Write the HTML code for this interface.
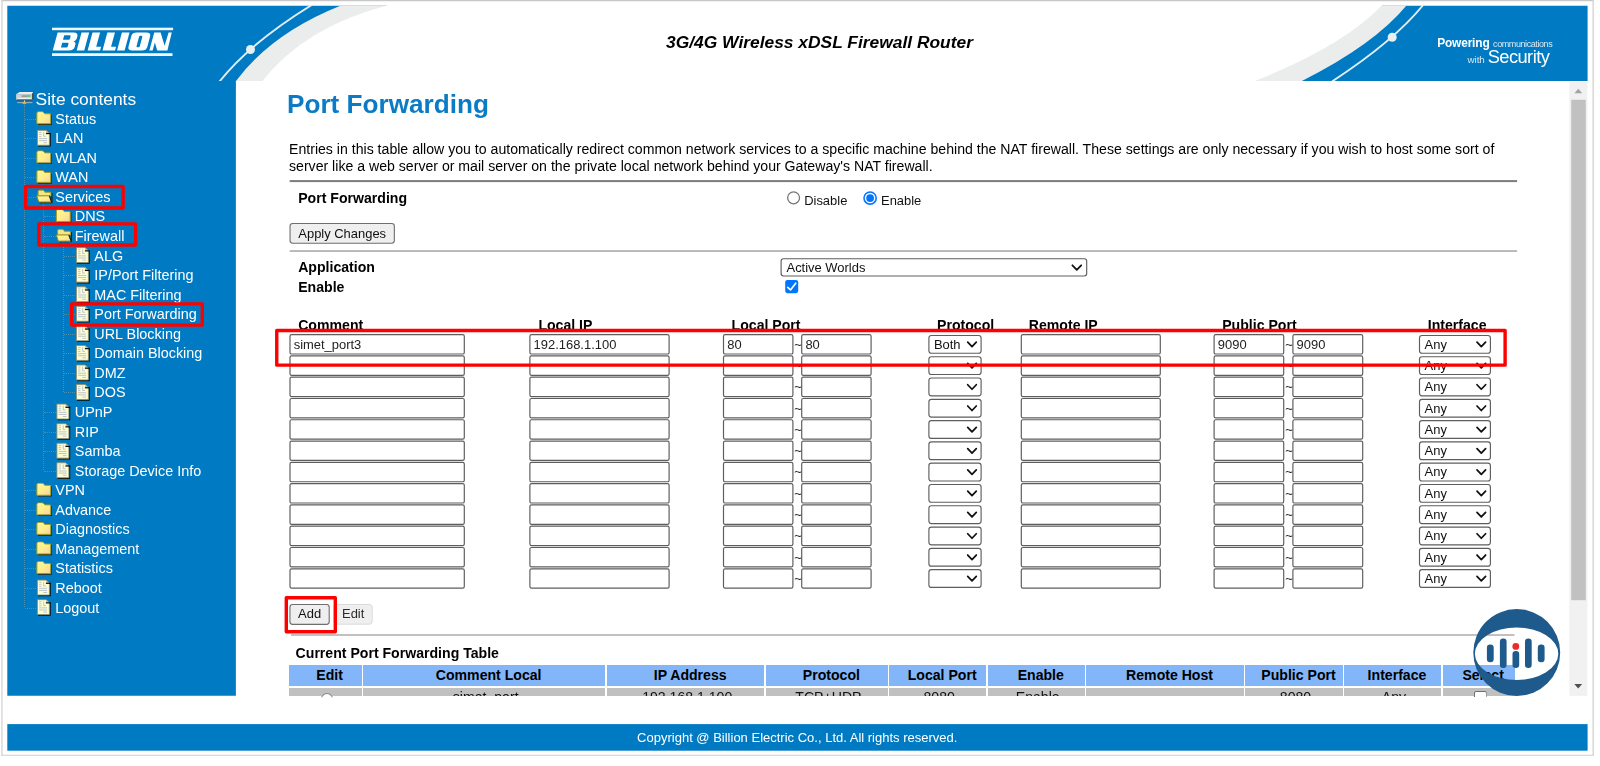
<!DOCTYPE html>
<html><head><meta charset="utf-8"><title>Port Forwarding</title>
<style>
html,body{margin:0;padding:0;background:#fff;}
body{width:1600px;height:766px;position:relative;overflow:hidden;font-family:"Liberation Sans",sans-serif;}
.abs{position:absolute;}
.frame{position:absolute;left:1px;top:0;width:1591px;height:755px;border:1.5px solid #cfcfcf;border-left-color:#d8d8d8;}
.side{position:absolute;left:8px;top:81px;width:228px;height:615px;background:#007bc3;}
.foot{position:absolute;left:8px;top:724px;width:1580px;height:27px;color:#fff;font-size:13px;text-align:center;line-height:27.6px;padding-right:1.5px;box-sizing:border-box;}
.t{position:absolute;color:#fff;font-size:14.4px;white-space:nowrap;line-height:16px;letter-spacing:0;}
.red{position:absolute;overflow:visible;}
.lbl{position:absolute;font-weight:bold;font-size:14.1px;color:#000;white-space:nowrap;line-height:16px;}
.inp{position:absolute;box-sizing:border-box;height:20.4px;border:1px solid #767676;border-radius:2px;background:#fff;font-size:12.95px;color:#222;line-height:18.6px;padding-left:3.3px;white-space:nowrap;}
.sel{position:absolute;box-sizing:border-box;height:18.8px;border:1px solid #767676;border-radius:2.8px;background:#fff;font-size:12.95px;color:#111;line-height:17.2px;padding-left:4.9px;white-space:nowrap;}
.sel svg{position:absolute;right:4.6px;top:5.4px;}
.itx{position:absolute;font-size:12.95px;color:#222;line-height:16px;white-space:nowrap;}
.til{position:absolute;font-size:12.9px;color:#223;line-height:14px;}
.btn{position:absolute;box-sizing:border-box;border:1px solid #767676;border-radius:3px;background:#efefef;font-size:12.9px;color:#111;text-align:center;white-space:nowrap;}
.hr{position:absolute;left:289px;width:1228px;height:0;}
.th{position:absolute;top:665.3px;height:20.3px;background:#83b6f9;font-weight:bold;font-size:14.1px;text-align:center;line-height:20.3px;color:#000;white-space:nowrap;box-sizing:border-box;padding-left:9px;}
.td{position:absolute;top:687.5px;height:8.5px;background:#c0c0c0;font-size:14.1px;text-align:center;line-height:18px;color:#111;white-space:nowrap;overflow:hidden;box-sizing:border-box;padding-left:3px;}
</style></head><body>
<div id="wrap" style="position:absolute;left:0;top:0;width:1600px;height:766px;filter:blur(0.35px)">

<svg class="abs" style="left:0;top:0" width="1600" height="766" viewBox="0 0 1600 766">
<rect x="1.2" y="0" width="1592.6" height="1.25" fill="#c7c7c7"/><rect x="1.2" y="0" width="1.5" height="755.9" fill="#d9d9d9"/><rect x="1592.5" y="0" width="1.35" height="755.9" fill="#d4d4d4"/><rect x="1.2" y="754.7" width="1592.6" height="1.2" fill="#d6d6d6"/>
<path d="M7.3,5.8 H1587.6 V81 H235.9 V695.8 H7.3 Z" fill="#007bc3"/>
<rect x="7.3" y="724.1" width="1580.3" height="26.6" fill="#007bc3"/>
</svg>
<svg class="abs" style="left:7px;top:5px" width="1582" height="76" viewBox="7 5 1582 76">
<defs><clipPath id="hc"><rect x="0" y="5.8" width="1600" height="90"/></clipPath></defs>
<g clip-path="url(#hc)"><path d="M236,81 Q272,33 341,5.6 L341,3 L1406.5,3 L1406.5,5.6 Q1373.8,45 1301.9,81 Z" fill="#ebecec"/></g>
<path d="M262.5,81 Q305,27 387,5.6 L387,3 L1381.8,3 L1381.8,5.6 Q1341.8,47 1254.6,81 Z" fill="#fff"/>
<path d="M219.5,81.5 Q250,43 312.5,4.5" fill="none" stroke="#e3edf4" stroke-width="1.9"/>
<circle cx="250.5" cy="49.5" r="4.5" fill="#e9eef1"/>
<path d="M1332,81.5 Q1394.2,41 1423.6,4.5" fill="none" stroke="#e3edf4" stroke-width="1.9"/>
<circle cx="1392.2" cy="37.2" r="4.5" fill="#e9eef1"/>
</svg>
<svg class="abs" style="left:48px;top:24px" width="130" height="36" viewBox="48 24 130 36">
<g fill="#fff">
<rect x="52" y="27.7" width="121.1" height="2.5" fill="#f0f6fb"/>
<rect x="52" y="53.2" width="120.5" height="2.8" fill="#f0f6fb"/>
<g transform="translate(0,41.5) scale(0.997,0.972) translate(0.2,-41.5)"><path fill-rule="evenodd" d="M52.7,50.8 L57.6,32.2 L73.5,32.2 Q78.3,32.2 77.4,36.2 L76.9,38.2 Q76.2,40.6 73.6,41.4 Q76,42.1 75.4,44.6 L74.8,46.9 Q73.8,50.8 68.8,50.8 Z M64.2,35.1 L63,39.7 L68.6,39.7 Q69.7,39.7 70,38.6 L70.6,36.2 Q70.9,35.1 69.8,35.1 Z M62.2,42.7 L60.9,47.6 L66.5,47.6 Q67.6,47.6 67.9,46.5 L68.5,43.8 Q68.8,42.7 67.7,42.7 Z"/>
<path d="M76.7,50.8 L81.6,32.2 L89.2,32.2 L84.3,50.8 Z"/>
<path d="M87.7,50.8 L92.6,32.2 L100.2,32.2 L96.3,47 L101.2,47 L100.2,50.8 Z"/>
<path d="M102.6,50.8 L107.5,32.2 L115.1,32.2 L111.2,47 L116.2,47 L115.2,50.8 Z"/>
<path d="M117.2,50.8 L122.1,32.2 L129.7,32.2 L124.8,50.8 Z"/>
<path fill-rule="evenodd" d="M132.5,50.8 Q127.6,50.8 128.7,46.6 L131.6,35.6 Q132.5,32.2 137,32.2 L146.6,32.2 Q151.4,32.2 150.4,36.2 L147.5,47.2 Q146.5,50.8 142,50.8 Z M140.6,35.6 Q139.6,35.6 139.3,36.7 L136.8,46.2 Q136.5,47.4 137.6,47.4 L138.6,47.4 Q139.7,47.4 140,46.3 L142.5,36.8 Q142.8,35.6 141.7,35.6 Z"/>
<path d="M149.6,50.8 L154.5,32.2 L160.9,32.2 L164.9,46 L168.9,32.2 L172.1,32.2 L167.7,50.8 L157.5,50.8 L155.1,42.6 L152.9,50.8 Z"/>
</g></g></svg>
<div class="abs" style="left:519.5px;top:32.4px;width:600px;text-align:center;font-weight:bold;font-style:italic;font-size:17.4px;line-height:20px;color:#000;white-space:nowrap">3G/4G Wireless xDSL Firewall Router</div>
<div class="abs" style="left:1437.2px;top:35.7px;color:#fff;white-space:nowrap;font-size:11.9px;line-height:14px;font-weight:bold;letter-spacing:-0.15px">Powering<span style="font-weight:normal;font-size:9px;letter-spacing:-0.42px;color:#dbe9f4;margin-left:3.6px">communications</span></div>
<div class="abs" style="left:1467.6px;top:46.2px;color:#fff;white-space:nowrap;font-size:9.8px;line-height:22px;letter-spacing:-0.1px"><span style="color:#dbe9f4">with</span><span style="font-size:18.3px;letter-spacing:-0.55px;margin-left:3px">Security</span></div>
<div class="foot">Copyright @ Billion Electric Co., Ltd. All rights reserved.</div>
<svg width="0" height="0" style="position:absolute"><defs><linearGradient id="fg" x1="0" y1="0" x2="1" y2="1"><stop offset="0" stop-color="#fff691"/><stop offset="0.5" stop-color="#fdef8c"/><stop offset="1" stop-color="#f9cfa8"/></linearGradient></defs></svg>
<svg class="abs" style="left:15px;top:90px" width="20" height="16" viewBox="0 0 20 16">
<path d="M1.1,4.3 L4.6,2.1 L18,2.1 L17.1,4.3 Z" fill="#ececec"/>
<path d="M17.1,4.2 L18.4,2.2 L18.4,8.2 L17.1,9.8 Z" fill="#3a3a3a"/>
<rect x="1.1" y="4.15" width="16" height="5.6" fill="#cfcfcf"/>
<rect x="6.6" y="5.4" width="6.4" height="1.4" fill="#8e8e8e"/>
<rect x="13" y="5.1" width="2.6" height="1.8" fill="#5fcf6c"/>
<rect x="2.8" y="7.9" width="13.2" height="1" fill="#f2f2f2"/>
<rect x="1.8" y="9.5" width="15.6" height="0.95" fill="#484848"/>
<rect x="9" y="10.4" width="1" height="1.6" fill="#d6d6d6"/>
<rect x="2.2" y="12.3" width="15.2" height="0.8" fill="#c4c4c4"/>
<rect x="2.2" y="13.1" width="15.2" height="0.8" fill="#6c6c6c"/>
<ellipse cx="9.4" cy="13" rx="2.05" ry="1.2" fill="#f0a61a"/>
<ellipse cx="9" cy="12.6" rx="0.9" ry="0.45" fill="#f8d060"/>
</svg>
<div class="t" style="left:35.6px;top:89.4px;font-size:17.4px;line-height:20px">Site contents</div>
<div class="abs" style="left:23.9px;top:105px;width:0;height:502.07500000000005px;border-left:1px dotted rgba(172,170,145,0.42)"></div>
<div class="abs" style="left:43.3px;top:203.42000000000002px;width:0;height:266.77px;border-left:1px dotted rgba(172,170,145,0.42)"></div>
<div class="abs" style="left:62.8px;top:242.53px;width:0;height:149.43999999999997px;border-left:1px dotted rgba(172,170,145,0.42)"></div>
<div class="abs" style="left:24.799999999999997px;top:118.7px;width:11.5px;height:0;border-top:1px dotted rgba(172,170,145,0.42)"></div>
<svg class="abs" style="left:36px;top:111px" width="17" height="15" viewBox="-0.3 -0.2 17 15"><path d="M1.6,13.2 L15,13.2 L15,3.6" fill="none" stroke="#26260a" stroke-width="1.2"/><path d="M0.6,12.5 L0.6,2 Q0.6,0.6 2,0.6 L6,0.6 Q7,0.6 7.8,1.7 L8.5,2.6 L13.4,2.6 Q14.4,2.6 14.4,3.6 L14.4,12.5 Z" fill="url(#fg)" stroke="#a59c20" stroke-width="1"/><path d="M2,1.6 L6,1.6" stroke="#fffbd0" stroke-width="0.9" opacity="0.8"/></svg>
<div class="t" style="left:55.3px;top:110.6px">Status</div>
<div class="abs" style="left:24.799999999999997px;top:138.255px;width:11.5px;height:0;border-top:1px dotted rgba(172,170,145,0.42)"></div>
<svg class="abs" style="left:36px;top:129px" width="16" height="19" viewBox="-0.7 -0.66 16 19"><path d="M13.4,3.4 L13.4,16.2 L1.2,16.2" fill="none" stroke="#0c0c0c" stroke-width="1.3"/><path d="M0.7,0.7 L9.4,0.7 L12.7,3.8 L12.7,15.6 L0.7,15.6 Z" fill="#ffffd6" stroke="#8c8c6a" stroke-width="0.9"/><path d="M9.4,0.8 L9.4,3.7 L12.6,3.7 Z" fill="#b9b99c"/><path d="M9.2,3.9 L13.9,3.9" stroke="#0c0c0c" stroke-width="1.2"/><path d="M2.4,2.8 H4.8 M2.4,4.8 H4.8 M2.4,6.8 H4.8 M7,2.4 V6.6 H9.2 M2.4,8.9 H10.4 M2.4,11 H10.4 M6.6,13.1 H10.4" fill="none" stroke="#b4bccc" stroke-width="0.9"/></svg>
<div class="t" style="left:55.3px;top:130.2px">LAN</div>
<div class="abs" style="left:24.799999999999997px;top:157.81px;width:11.5px;height:0;border-top:1px dotted rgba(172,170,145,0.42)"></div>
<svg class="abs" style="left:36px;top:150px" width="17" height="15" viewBox="-0.3 -0.31 17 15"><path d="M1.6,13.2 L15,13.2 L15,3.6" fill="none" stroke="#26260a" stroke-width="1.2"/><path d="M0.6,12.5 L0.6,2 Q0.6,0.6 2,0.6 L6,0.6 Q7,0.6 7.8,1.7 L8.5,2.6 L13.4,2.6 Q14.4,2.6 14.4,3.6 L14.4,12.5 Z" fill="url(#fg)" stroke="#a59c20" stroke-width="1"/><path d="M2,1.6 L6,1.6" stroke="#fffbd0" stroke-width="0.9" opacity="0.8"/></svg>
<div class="t" style="left:55.3px;top:149.7px">WLAN</div>
<div class="abs" style="left:24.799999999999997px;top:177.365px;width:11.5px;height:0;border-top:1px dotted rgba(172,170,145,0.42)"></div>
<svg class="abs" style="left:36px;top:169px" width="17" height="15" viewBox="-0.3 -0.87 17 15"><path d="M1.6,13.2 L15,13.2 L15,3.6" fill="none" stroke="#26260a" stroke-width="1.2"/><path d="M0.6,12.5 L0.6,2 Q0.6,0.6 2,0.6 L6,0.6 Q7,0.6 7.8,1.7 L8.5,2.6 L13.4,2.6 Q14.4,2.6 14.4,3.6 L14.4,12.5 Z" fill="url(#fg)" stroke="#a59c20" stroke-width="1"/><path d="M2,1.6 L6,1.6" stroke="#fffbd0" stroke-width="0.9" opacity="0.8"/></svg>
<div class="t" style="left:55.3px;top:169.3px">WAN</div>
<div class="abs" style="left:24.799999999999997px;top:196.92000000000002px;width:11.5px;height:0;border-top:1px dotted rgba(172,170,145,0.42)"></div>
<svg class="abs" style="left:36px;top:189px" width="18" height="15" viewBox="-0.1 -0.62 18 15"><path d="M15.8,3.4 L15.8,13 L3.4,13.2" fill="none" stroke="#26260a" stroke-width="1.3"/><path d="M2,11 L2,2 Q2,0.6 3.4,0.6 L6.6,0.6 Q7.6,0.6 8.2,1.6 L8.8,2.6 L13.8,2.6 Q14.8,2.6 14.8,3.6 L14.8,6.4" fill="#f3e686" stroke="#a59c20" stroke-width="1"/><path d="M0.6,6.2 L13.2,6.2 L15.4,12.4 L2.8,12.4 Z" fill="url(#fg)" stroke="#8f8618" stroke-width="1"/><path d="M13.3,6 L15.6,12.6" stroke="#1a1a08" stroke-width="1.1"/></svg>
<div class="t" style="left:55.3px;top:188.8px">Services</div>
<div class="abs" style="left:44.3px;top:216.47500000000002px;width:11.5px;height:0;border-top:1px dotted rgba(172,170,145,0.42)"></div>
<svg class="abs" style="left:55px;top:208px" width="17" height="15" viewBox="-0.8 -0.98 17 15"><path d="M1.6,13.2 L15,13.2 L15,3.6" fill="none" stroke="#26260a" stroke-width="1.2"/><path d="M0.6,12.5 L0.6,2 Q0.6,0.6 2,0.6 L6,0.6 Q7,0.6 7.8,1.7 L8.5,2.6 L13.4,2.6 Q14.4,2.6 14.4,3.6 L14.4,12.5 Z" fill="url(#fg)" stroke="#a59c20" stroke-width="1"/><path d="M2,1.6 L6,1.6" stroke="#fffbd0" stroke-width="0.9" opacity="0.8"/></svg>
<div class="t" style="left:74.8px;top:208.4px">DNS</div>
<div class="abs" style="left:44.3px;top:236.03px;width:11.5px;height:0;border-top:1px dotted rgba(172,170,145,0.42)"></div>
<svg class="abs" style="left:55px;top:228px" width="18" height="15" viewBox="-0.6 -0.73 18 15"><path d="M15.8,3.4 L15.8,13 L3.4,13.2" fill="none" stroke="#26260a" stroke-width="1.3"/><path d="M2,11 L2,2 Q2,0.6 3.4,0.6 L6.6,0.6 Q7.6,0.6 8.2,1.6 L8.8,2.6 L13.8,2.6 Q14.8,2.6 14.8,3.6 L14.8,6.4" fill="#f3e686" stroke="#a59c20" stroke-width="1"/><path d="M0.6,6.2 L13.2,6.2 L15.4,12.4 L2.8,12.4 Z" fill="url(#fg)" stroke="#8f8618" stroke-width="1"/><path d="M13.3,6 L15.6,12.6" stroke="#1a1a08" stroke-width="1.1"/></svg>
<div class="t" style="left:74.8px;top:227.9px">Firewall</div>
<div class="abs" style="left:63.8px;top:255.58499999999998px;width:11.5px;height:0;border-top:1px dotted rgba(172,170,145,0.42)"></div>
<svg class="abs" style="left:75px;top:246px" width="16" height="19" viewBox="-0.7 -0.98 16 19"><path d="M13.4,3.4 L13.4,16.2 L1.2,16.2" fill="none" stroke="#0c0c0c" stroke-width="1.3"/><path d="M0.7,0.7 L9.4,0.7 L12.7,3.8 L12.7,15.6 L0.7,15.6 Z" fill="#ffffd6" stroke="#8c8c6a" stroke-width="0.9"/><path d="M9.4,0.8 L9.4,3.7 L12.6,3.7 Z" fill="#b9b99c"/><path d="M9.2,3.9 L13.9,3.9" stroke="#0c0c0c" stroke-width="1.2"/><path d="M2.4,2.8 H4.8 M2.4,4.8 H4.8 M2.4,6.8 H4.8 M7,2.4 V6.6 H9.2 M2.4,8.9 H10.4 M2.4,11 H10.4 M6.6,13.1 H10.4" fill="none" stroke="#b4bccc" stroke-width="0.9"/></svg>
<div class="t" style="left:94.3px;top:247.5px">ALG</div>
<div class="abs" style="left:63.8px;top:275.14px;width:11.5px;height:0;border-top:1px dotted rgba(172,170,145,0.42)"></div>
<svg class="abs" style="left:75px;top:266px" width="16" height="19" viewBox="-0.7 -0.54 16 19"><path d="M13.4,3.4 L13.4,16.2 L1.2,16.2" fill="none" stroke="#0c0c0c" stroke-width="1.3"/><path d="M0.7,0.7 L9.4,0.7 L12.7,3.8 L12.7,15.6 L0.7,15.6 Z" fill="#ffffd6" stroke="#8c8c6a" stroke-width="0.9"/><path d="M9.4,0.8 L9.4,3.7 L12.6,3.7 Z" fill="#b9b99c"/><path d="M9.2,3.9 L13.9,3.9" stroke="#0c0c0c" stroke-width="1.2"/><path d="M2.4,2.8 H4.8 M2.4,4.8 H4.8 M2.4,6.8 H4.8 M7,2.4 V6.6 H9.2 M2.4,8.9 H10.4 M2.4,11 H10.4 M6.6,13.1 H10.4" fill="none" stroke="#b4bccc" stroke-width="0.9"/></svg>
<div class="t" style="left:94.3px;top:267.0px">IP/Port Filtering</div>
<div class="abs" style="left:63.8px;top:294.695px;width:11.5px;height:0;border-top:1px dotted rgba(172,170,145,0.42)"></div>
<svg class="abs" style="left:75px;top:286px" width="16" height="19" viewBox="-0.7 -0.09 16 19"><path d="M13.4,3.4 L13.4,16.2 L1.2,16.2" fill="none" stroke="#0c0c0c" stroke-width="1.3"/><path d="M0.7,0.7 L9.4,0.7 L12.7,3.8 L12.7,15.6 L0.7,15.6 Z" fill="#ffffd6" stroke="#8c8c6a" stroke-width="0.9"/><path d="M9.4,0.8 L9.4,3.7 L12.6,3.7 Z" fill="#b9b99c"/><path d="M9.2,3.9 L13.9,3.9" stroke="#0c0c0c" stroke-width="1.2"/><path d="M2.4,2.8 H4.8 M2.4,4.8 H4.8 M2.4,6.8 H4.8 M7,2.4 V6.6 H9.2 M2.4,8.9 H10.4 M2.4,11 H10.4 M6.6,13.1 H10.4" fill="none" stroke="#b4bccc" stroke-width="0.9"/></svg>
<div class="t" style="left:94.3px;top:286.6px">MAC Filtering</div>
<div class="abs" style="left:63.8px;top:314.25px;width:11.5px;height:0;border-top:1px dotted rgba(172,170,145,0.42)"></div>
<svg class="abs" style="left:75px;top:305px" width="16" height="19" viewBox="-0.7 -0.65 16 19"><path d="M13.4,3.4 L13.4,16.2 L1.2,16.2" fill="none" stroke="#0c0c0c" stroke-width="1.3"/><path d="M0.7,0.7 L9.4,0.7 L12.7,3.8 L12.7,15.6 L0.7,15.6 Z" fill="#ffffd6" stroke="#8c8c6a" stroke-width="0.9"/><path d="M9.4,0.8 L9.4,3.7 L12.6,3.7 Z" fill="#b9b99c"/><path d="M9.2,3.9 L13.9,3.9" stroke="#0c0c0c" stroke-width="1.2"/><path d="M2.4,2.8 H4.8 M2.4,4.8 H4.8 M2.4,6.8 H4.8 M7,2.4 V6.6 H9.2 M2.4,8.9 H10.4 M2.4,11 H10.4 M6.6,13.1 H10.4" fill="none" stroke="#b4bccc" stroke-width="0.9"/></svg>
<div class="t" style="left:94.3px;top:306.1px">Port Forwarding</div>
<div class="abs" style="left:63.8px;top:333.805px;width:11.5px;height:0;border-top:1px dotted rgba(172,170,145,0.42)"></div>
<svg class="abs" style="left:75px;top:325px" width="16" height="19" viewBox="-0.7 -0.2 16 19"><path d="M13.4,3.4 L13.4,16.2 L1.2,16.2" fill="none" stroke="#0c0c0c" stroke-width="1.3"/><path d="M0.7,0.7 L9.4,0.7 L12.7,3.8 L12.7,15.6 L0.7,15.6 Z" fill="#ffffd6" stroke="#8c8c6a" stroke-width="0.9"/><path d="M9.4,0.8 L9.4,3.7 L12.6,3.7 Z" fill="#b9b99c"/><path d="M9.2,3.9 L13.9,3.9" stroke="#0c0c0c" stroke-width="1.2"/><path d="M2.4,2.8 H4.8 M2.4,4.8 H4.8 M2.4,6.8 H4.8 M7,2.4 V6.6 H9.2 M2.4,8.9 H10.4 M2.4,11 H10.4 M6.6,13.1 H10.4" fill="none" stroke="#b4bccc" stroke-width="0.9"/></svg>
<div class="t" style="left:94.3px;top:325.7px">URL Blocking</div>
<div class="abs" style="left:63.8px;top:353.36px;width:11.5px;height:0;border-top:1px dotted rgba(172,170,145,0.42)"></div>
<svg class="abs" style="left:75px;top:344px" width="16" height="19" viewBox="-0.7 -0.76 16 19"><path d="M13.4,3.4 L13.4,16.2 L1.2,16.2" fill="none" stroke="#0c0c0c" stroke-width="1.3"/><path d="M0.7,0.7 L9.4,0.7 L12.7,3.8 L12.7,15.6 L0.7,15.6 Z" fill="#ffffd6" stroke="#8c8c6a" stroke-width="0.9"/><path d="M9.4,0.8 L9.4,3.7 L12.6,3.7 Z" fill="#b9b99c"/><path d="M9.2,3.9 L13.9,3.9" stroke="#0c0c0c" stroke-width="1.2"/><path d="M2.4,2.8 H4.8 M2.4,4.8 H4.8 M2.4,6.8 H4.8 M7,2.4 V6.6 H9.2 M2.4,8.9 H10.4 M2.4,11 H10.4 M6.6,13.1 H10.4" fill="none" stroke="#b4bccc" stroke-width="0.9"/></svg>
<div class="t" style="left:94.3px;top:345.3px">Domain Blocking</div>
<div class="abs" style="left:63.8px;top:372.915px;width:11.5px;height:0;border-top:1px dotted rgba(172,170,145,0.42)"></div>
<svg class="abs" style="left:75px;top:364px" width="16" height="19" viewBox="-0.7 -0.31 16 19"><path d="M13.4,3.4 L13.4,16.2 L1.2,16.2" fill="none" stroke="#0c0c0c" stroke-width="1.3"/><path d="M0.7,0.7 L9.4,0.7 L12.7,3.8 L12.7,15.6 L0.7,15.6 Z" fill="#ffffd6" stroke="#8c8c6a" stroke-width="0.9"/><path d="M9.4,0.8 L9.4,3.7 L12.6,3.7 Z" fill="#b9b99c"/><path d="M9.2,3.9 L13.9,3.9" stroke="#0c0c0c" stroke-width="1.2"/><path d="M2.4,2.8 H4.8 M2.4,4.8 H4.8 M2.4,6.8 H4.8 M7,2.4 V6.6 H9.2 M2.4,8.9 H10.4 M2.4,11 H10.4 M6.6,13.1 H10.4" fill="none" stroke="#b4bccc" stroke-width="0.9"/></svg>
<div class="t" style="left:94.3px;top:364.8px">DMZ</div>
<div class="abs" style="left:63.8px;top:392.46999999999997px;width:11.5px;height:0;border-top:1px dotted rgba(172,170,145,0.42)"></div>
<svg class="abs" style="left:75px;top:383px" width="16" height="19" viewBox="-0.7 -0.87 16 19"><path d="M13.4,3.4 L13.4,16.2 L1.2,16.2" fill="none" stroke="#0c0c0c" stroke-width="1.3"/><path d="M0.7,0.7 L9.4,0.7 L12.7,3.8 L12.7,15.6 L0.7,15.6 Z" fill="#ffffd6" stroke="#8c8c6a" stroke-width="0.9"/><path d="M9.4,0.8 L9.4,3.7 L12.6,3.7 Z" fill="#b9b99c"/><path d="M9.2,3.9 L13.9,3.9" stroke="#0c0c0c" stroke-width="1.2"/><path d="M2.4,2.8 H4.8 M2.4,4.8 H4.8 M2.4,6.8 H4.8 M7,2.4 V6.6 H9.2 M2.4,8.9 H10.4 M2.4,11 H10.4 M6.6,13.1 H10.4" fill="none" stroke="#b4bccc" stroke-width="0.9"/></svg>
<div class="t" style="left:94.3px;top:384.4px">DOS</div>
<div class="abs" style="left:44.3px;top:412.025px;width:11.5px;height:0;border-top:1px dotted rgba(172,170,145,0.42)"></div>
<svg class="abs" style="left:56px;top:403px" width="16" height="19" viewBox="-0.2 -0.42 16 19"><path d="M13.4,3.4 L13.4,16.2 L1.2,16.2" fill="none" stroke="#0c0c0c" stroke-width="1.3"/><path d="M0.7,0.7 L9.4,0.7 L12.7,3.8 L12.7,15.6 L0.7,15.6 Z" fill="#ffffd6" stroke="#8c8c6a" stroke-width="0.9"/><path d="M9.4,0.8 L9.4,3.7 L12.6,3.7 Z" fill="#b9b99c"/><path d="M9.2,3.9 L13.9,3.9" stroke="#0c0c0c" stroke-width="1.2"/><path d="M2.4,2.8 H4.8 M2.4,4.8 H4.8 M2.4,6.8 H4.8 M7,2.4 V6.6 H9.2 M2.4,8.9 H10.4 M2.4,11 H10.4 M6.6,13.1 H10.4" fill="none" stroke="#b4bccc" stroke-width="0.9"/></svg>
<div class="t" style="left:74.8px;top:403.9px">UPnP</div>
<div class="abs" style="left:44.3px;top:431.58px;width:11.5px;height:0;border-top:1px dotted rgba(172,170,145,0.42)"></div>
<svg class="abs" style="left:56px;top:422px" width="16" height="19" viewBox="-0.2 -0.98 16 19"><path d="M13.4,3.4 L13.4,16.2 L1.2,16.2" fill="none" stroke="#0c0c0c" stroke-width="1.3"/><path d="M0.7,0.7 L9.4,0.7 L12.7,3.8 L12.7,15.6 L0.7,15.6 Z" fill="#ffffd6" stroke="#8c8c6a" stroke-width="0.9"/><path d="M9.4,0.8 L9.4,3.7 L12.6,3.7 Z" fill="#b9b99c"/><path d="M9.2,3.9 L13.9,3.9" stroke="#0c0c0c" stroke-width="1.2"/><path d="M2.4,2.8 H4.8 M2.4,4.8 H4.8 M2.4,6.8 H4.8 M7,2.4 V6.6 H9.2 M2.4,8.9 H10.4 M2.4,11 H10.4 M6.6,13.1 H10.4" fill="none" stroke="#b4bccc" stroke-width="0.9"/></svg>
<div class="t" style="left:74.8px;top:423.5px">RIP</div>
<div class="abs" style="left:44.3px;top:451.135px;width:11.5px;height:0;border-top:1px dotted rgba(172,170,145,0.42)"></div>
<svg class="abs" style="left:56px;top:442px" width="16" height="19" viewBox="-0.2 -0.53 16 19"><path d="M13.4,3.4 L13.4,16.2 L1.2,16.2" fill="none" stroke="#0c0c0c" stroke-width="1.3"/><path d="M0.7,0.7 L9.4,0.7 L12.7,3.8 L12.7,15.6 L0.7,15.6 Z" fill="#ffffd6" stroke="#8c8c6a" stroke-width="0.9"/><path d="M9.4,0.8 L9.4,3.7 L12.6,3.7 Z" fill="#b9b99c"/><path d="M9.2,3.9 L13.9,3.9" stroke="#0c0c0c" stroke-width="1.2"/><path d="M2.4,2.8 H4.8 M2.4,4.8 H4.8 M2.4,6.8 H4.8 M7,2.4 V6.6 H9.2 M2.4,8.9 H10.4 M2.4,11 H10.4 M6.6,13.1 H10.4" fill="none" stroke="#b4bccc" stroke-width="0.9"/></svg>
<div class="t" style="left:74.8px;top:443.0px">Samba</div>
<div class="abs" style="left:44.3px;top:470.69px;width:11.5px;height:0;border-top:1px dotted rgba(172,170,145,0.42)"></div>
<svg class="abs" style="left:56px;top:462px" width="16" height="19" viewBox="-0.2 -0.09 16 19"><path d="M13.4,3.4 L13.4,16.2 L1.2,16.2" fill="none" stroke="#0c0c0c" stroke-width="1.3"/><path d="M0.7,0.7 L9.4,0.7 L12.7,3.8 L12.7,15.6 L0.7,15.6 Z" fill="#ffffd6" stroke="#8c8c6a" stroke-width="0.9"/><path d="M9.4,0.8 L9.4,3.7 L12.6,3.7 Z" fill="#b9b99c"/><path d="M9.2,3.9 L13.9,3.9" stroke="#0c0c0c" stroke-width="1.2"/><path d="M2.4,2.8 H4.8 M2.4,4.8 H4.8 M2.4,6.8 H4.8 M7,2.4 V6.6 H9.2 M2.4,8.9 H10.4 M2.4,11 H10.4 M6.6,13.1 H10.4" fill="none" stroke="#b4bccc" stroke-width="0.9"/></svg>
<div class="t" style="left:74.8px;top:462.6px">Storage Device Info</div>
<div class="abs" style="left:24.799999999999997px;top:490.245px;width:11.5px;height:0;border-top:1px dotted rgba(172,170,145,0.42)"></div>
<svg class="abs" style="left:36px;top:482px" width="17" height="15" viewBox="-0.3 -0.75 17 15"><path d="M1.6,13.2 L15,13.2 L15,3.6" fill="none" stroke="#26260a" stroke-width="1.2"/><path d="M0.6,12.5 L0.6,2 Q0.6,0.6 2,0.6 L6,0.6 Q7,0.6 7.8,1.7 L8.5,2.6 L13.4,2.6 Q14.4,2.6 14.4,3.6 L14.4,12.5 Z" fill="url(#fg)" stroke="#a59c20" stroke-width="1"/><path d="M2,1.6 L6,1.6" stroke="#fffbd0" stroke-width="0.9" opacity="0.8"/></svg>
<div class="t" style="left:55.3px;top:482.1px">VPN</div>
<div class="abs" style="left:24.799999999999997px;top:509.8px;width:11.5px;height:0;border-top:1px dotted rgba(172,170,145,0.42)"></div>
<svg class="abs" style="left:36px;top:502px" width="17" height="15" viewBox="-0.3 -0.3 17 15"><path d="M1.6,13.2 L15,13.2 L15,3.6" fill="none" stroke="#26260a" stroke-width="1.2"/><path d="M0.6,12.5 L0.6,2 Q0.6,0.6 2,0.6 L6,0.6 Q7,0.6 7.8,1.7 L8.5,2.6 L13.4,2.6 Q14.4,2.6 14.4,3.6 L14.4,12.5 Z" fill="url(#fg)" stroke="#a59c20" stroke-width="1"/><path d="M2,1.6 L6,1.6" stroke="#fffbd0" stroke-width="0.9" opacity="0.8"/></svg>
<div class="t" style="left:55.3px;top:501.7px">Advance</div>
<div class="abs" style="left:24.799999999999997px;top:529.355px;width:11.5px;height:0;border-top:1px dotted rgba(172,170,145,0.42)"></div>
<svg class="abs" style="left:36px;top:521px" width="17" height="15" viewBox="-0.3 -0.86 17 15"><path d="M1.6,13.2 L15,13.2 L15,3.6" fill="none" stroke="#26260a" stroke-width="1.2"/><path d="M0.6,12.5 L0.6,2 Q0.6,0.6 2,0.6 L6,0.6 Q7,0.6 7.8,1.7 L8.5,2.6 L13.4,2.6 Q14.4,2.6 14.4,3.6 L14.4,12.5 Z" fill="url(#fg)" stroke="#a59c20" stroke-width="1"/><path d="M2,1.6 L6,1.6" stroke="#fffbd0" stroke-width="0.9" opacity="0.8"/></svg>
<div class="t" style="left:55.3px;top:521.3px">Diagnostics</div>
<div class="abs" style="left:24.799999999999997px;top:548.91px;width:11.5px;height:0;border-top:1px dotted rgba(172,170,145,0.42)"></div>
<svg class="abs" style="left:36px;top:541px" width="17" height="15" viewBox="-0.3 -0.41 17 15"><path d="M1.6,13.2 L15,13.2 L15,3.6" fill="none" stroke="#26260a" stroke-width="1.2"/><path d="M0.6,12.5 L0.6,2 Q0.6,0.6 2,0.6 L6,0.6 Q7,0.6 7.8,1.7 L8.5,2.6 L13.4,2.6 Q14.4,2.6 14.4,3.6 L14.4,12.5 Z" fill="url(#fg)" stroke="#a59c20" stroke-width="1"/><path d="M2,1.6 L6,1.6" stroke="#fffbd0" stroke-width="0.9" opacity="0.8"/></svg>
<div class="t" style="left:55.3px;top:540.8px">Management</div>
<div class="abs" style="left:24.799999999999997px;top:568.465px;width:11.5px;height:0;border-top:1px dotted rgba(172,170,145,0.42)"></div>
<svg class="abs" style="left:36px;top:560px" width="17" height="15" viewBox="-0.3 -0.97 17 15"><path d="M1.6,13.2 L15,13.2 L15,3.6" fill="none" stroke="#26260a" stroke-width="1.2"/><path d="M0.6,12.5 L0.6,2 Q0.6,0.6 2,0.6 L6,0.6 Q7,0.6 7.8,1.7 L8.5,2.6 L13.4,2.6 Q14.4,2.6 14.4,3.6 L14.4,12.5 Z" fill="url(#fg)" stroke="#a59c20" stroke-width="1"/><path d="M2,1.6 L6,1.6" stroke="#fffbd0" stroke-width="0.9" opacity="0.8"/></svg>
<div class="t" style="left:55.3px;top:560.4px">Statistics</div>
<div class="abs" style="left:24.799999999999997px;top:588.02px;width:11.5px;height:0;border-top:1px dotted rgba(172,170,145,0.42)"></div>
<svg class="abs" style="left:36px;top:579px" width="16" height="19" viewBox="-0.7 -0.42 16 19"><path d="M13.4,3.4 L13.4,16.2 L1.2,16.2" fill="none" stroke="#0c0c0c" stroke-width="1.3"/><path d="M0.7,0.7 L9.4,0.7 L12.7,3.8 L12.7,15.6 L0.7,15.6 Z" fill="#ffffd6" stroke="#8c8c6a" stroke-width="0.9"/><path d="M9.4,0.8 L9.4,3.7 L12.6,3.7 Z" fill="#b9b99c"/><path d="M9.2,3.9 L13.9,3.9" stroke="#0c0c0c" stroke-width="1.2"/><path d="M2.4,2.8 H4.8 M2.4,4.8 H4.8 M2.4,6.8 H4.8 M7,2.4 V6.6 H9.2 M2.4,8.9 H10.4 M2.4,11 H10.4 M6.6,13.1 H10.4" fill="none" stroke="#b4bccc" stroke-width="0.9"/></svg>
<div class="t" style="left:55.3px;top:579.9px">Reboot</div>
<div class="abs" style="left:24.799999999999997px;top:607.575px;width:11.5px;height:0;border-top:1px dotted rgba(172,170,145,0.42)"></div>
<svg class="abs" style="left:36px;top:598px" width="16" height="19" viewBox="-0.7 -0.98 16 19"><path d="M13.4,3.4 L13.4,16.2 L1.2,16.2" fill="none" stroke="#0c0c0c" stroke-width="1.3"/><path d="M0.7,0.7 L9.4,0.7 L12.7,3.8 L12.7,15.6 L0.7,15.6 Z" fill="#ffffd6" stroke="#8c8c6a" stroke-width="0.9"/><path d="M9.4,0.8 L9.4,3.7 L12.6,3.7 Z" fill="#b9b99c"/><path d="M9.2,3.9 L13.9,3.9" stroke="#0c0c0c" stroke-width="1.2"/><path d="M2.4,2.8 H4.8 M2.4,4.8 H4.8 M2.4,6.8 H4.8 M7,2.4 V6.6 H9.2 M2.4,8.9 H10.4 M2.4,11 H10.4 M6.6,13.1 H10.4" fill="none" stroke="#b4bccc" stroke-width="0.9"/></svg>
<div class="t" style="left:55.3px;top:599.5px">Logout</div>
<svg class="red" style="left:22px;top:182px" width="105" height="30" viewBox="22 182 105 30"><rect x="25.7" y="186.45" width="97.4" height="21.55" fill="none" stroke="#fe0000" stroke-width="3.4" stroke-linejoin="round"/></svg>
<svg class="red" style="left:35px;top:220px" width="105" height="29" viewBox="35 220 105 29"><rect x="38.9" y="223.9" width="96.7" height="21.1" fill="none" stroke="#fe0000" stroke-width="3.4" stroke-linejoin="round"/></svg>
<svg class="red" style="left:68px;top:300px" width="138" height="29" viewBox="68 300 138 29"><rect x="71.7" y="303.9" width="130.6" height="21.2" fill="none" stroke="#fe0000" stroke-width="3.4" stroke-linejoin="round"/></svg>
<div class="abs" style="left:287px;top:89px;font-weight:bold;font-size:26.15px;line-height:30px;color:#0a7bc4;white-space:nowrap">Port Forwarding</div>
<div class="abs" style="left:289px;top:141.1px;font-size:14.12px;line-height:16.6px;color:#000;white-space:nowrap">Entries in this table allow you to automatically redirect common network services to a specific machine behind the NAT firewall. These settings are only necessary if you wish to host some sort of<br>server like a web server or mail server on the private local network behind your Gateway's NAT firewall.</div>
<svg class="abs" style="left:285px;top:176px" width="1240" height="80" viewBox="285 176 1240 80"><rect x="289.7" y="180.1" width="1227.4" height="2" fill="#7c7c7c"/><rect x="289.7" y="250.1" width="1227.4" height="1.9" fill="#b7b7b7"/></svg>
<div class="lbl" style="left:298.2px;top:190px">Port Forwarding</div>
<svg class="abs" style="left:784px;top:188px" width="100" height="20" viewBox="784 188 100 20"><circle cx="793.6" cy="197.85" r="5.95" fill="#fff" stroke="#777" stroke-width="1.3"/><circle cx="870.1" cy="198.05" r="6.1" fill="#fff" stroke="#0a74fc" stroke-width="1.6"/><circle cx="870.1" cy="198.1" r="3.9" fill="#0075ff"/></svg>
<div class="abs" style="left:804.2px;top:193.4px;font-size:12.95px;line-height:15px;color:#111">Disable</div>
<div class="abs" style="left:881px;top:193.4px;font-size:12.95px;line-height:15px;color:#111">Enable</div>
<svg class="abs" style="left:286px;top:220px" width="114" height="28" viewBox="286 220 114 28"><rect x="290.05" y="223.45" width="104.3" height="19.75" rx="2.6" fill="#efefef" stroke="#6e6e6e" stroke-width="1.1"/></svg>
<div class="itx" style="left:289.5px;top:226.3px;width:105.4px;text-align:center;color:#111">Apply Changes</div>
<div class="lbl" style="left:298.2px;top:259.4px">Application</div>
<div class="lbl" style="left:298.2px;top:278.8px">Enable</div>
<svg class="abs" style="left:778px;top:256px" width="312" height="24" viewBox="778 256 312 24"><rect x="781.1" y="258.7" width="305.6" height="17.3" rx="2.4" fill="#fff" stroke="#5e5e5e" stroke-width="1.15"/><path d="M1072.4,265.3 L1076.8,269.8 L1081.2,265.3" fill="none" stroke="#111" stroke-width="1.75" stroke-linecap="round" stroke-linejoin="round"/></svg>
<div class="itx" style="left:786.5px;top:260px;color:#111">Active Worlds</div>
<svg class="abs" style="left:783px;top:278px" width="18" height="18" viewBox="783 278 18 18"><rect x="785.2" y="280.05" width="13" height="13.1" rx="2.3" fill="#0075ff"/><path d="M787.7,287.3 L790.5,289.9 L795.7,283.2" fill="none" stroke="#fff" stroke-width="1.7" stroke-linecap="round" stroke-linejoin="round"/></svg>
<div class="lbl" style="left:298.2px;top:317.4px">Comment</div>
<div class="lbl" style="left:538.4px;top:317.4px">Local IP</div>
<div class="lbl" style="left:731.6px;top:317.4px">Local Port</div>
<div class="lbl" style="left:937px;top:317.4px">Protocol</div>
<div class="lbl" style="left:1028.8px;top:317.4px">Remote IP</div>
<div class="lbl" style="left:1222.2px;top:317.4px">Public Port</div>
<div class="lbl" style="left:1427.8px;top:317.4px">Interface</div>
<svg class="abs" style="left:280px;top:330px" width="1220" height="265" viewBox="280 330 1220 265"><rect x="290.0" y="334.6" width="174.3" height="19.4" rx="1.6" fill="#fff" stroke="#5e5e5e" stroke-width="1.18"/><rect x="529.9" y="334.6" width="139.2" height="19.4" rx="1.6" fill="#fff" stroke="#5e5e5e" stroke-width="1.18"/><rect x="723.5" y="334.6" width="69.4" height="19.4" rx="1.6" fill="#fff" stroke="#5e5e5e" stroke-width="1.18"/><rect x="801.7" y="334.6" width="69.4" height="19.4" rx="1.6" fill="#fff" stroke="#5e5e5e" stroke-width="1.18"/><rect x="1021.3" y="334.6" width="139" height="19.4" rx="1.6" fill="#fff" stroke="#5e5e5e" stroke-width="1.18"/><rect x="1214.1" y="334.6" width="69.6" height="19.4" rx="1.6" fill="#fff" stroke="#5e5e5e" stroke-width="1.18"/><rect x="1292.9" y="334.6" width="69.8" height="19.4" rx="1.6" fill="#fff" stroke="#5e5e5e" stroke-width="1.18"/><rect x="928.9" y="335.45" width="52.2" height="17.8" rx="2.5" fill="#fff" stroke="#5e5e5e" stroke-width="1.15"/><path d="M967.7,342.15 L972.0,346.65 L976.3,342.15" fill="none" stroke="#111" stroke-width="1.75" stroke-linecap="round" stroke-linejoin="round"/><rect x="1419.5" y="335.45" width="70.9" height="17.8" rx="2.5" fill="#fff" stroke="#5e5e5e" stroke-width="1.15"/><path d="M1477.0,342.15 L1481.3,346.65 L1485.6,342.15" fill="none" stroke="#111" stroke-width="1.75" stroke-linecap="round" stroke-linejoin="round"/><rect x="290.0" y="355.89" width="174.3" height="19.4" rx="1.6" fill="#fff" stroke="#5e5e5e" stroke-width="1.18"/><rect x="529.9" y="355.89" width="139.2" height="19.4" rx="1.6" fill="#fff" stroke="#5e5e5e" stroke-width="1.18"/><rect x="723.5" y="355.89" width="69.4" height="19.4" rx="1.6" fill="#fff" stroke="#5e5e5e" stroke-width="1.18"/><rect x="801.7" y="355.89" width="69.4" height="19.4" rx="1.6" fill="#fff" stroke="#5e5e5e" stroke-width="1.18"/><rect x="1021.3" y="355.89" width="139" height="19.4" rx="1.6" fill="#fff" stroke="#5e5e5e" stroke-width="1.18"/><rect x="1214.1" y="355.89" width="69.6" height="19.4" rx="1.6" fill="#fff" stroke="#5e5e5e" stroke-width="1.18"/><rect x="1292.9" y="355.89" width="69.8" height="19.4" rx="1.6" fill="#fff" stroke="#5e5e5e" stroke-width="1.18"/><rect x="928.9" y="356.74" width="52.2" height="17.8" rx="2.5" fill="#fff" stroke="#5e5e5e" stroke-width="1.15"/><path d="M967.7,363.44 L972.0,367.94 L976.3,363.44" fill="none" stroke="#111" stroke-width="1.75" stroke-linecap="round" stroke-linejoin="round"/><rect x="1419.5" y="356.74" width="70.9" height="17.8" rx="2.5" fill="#fff" stroke="#5e5e5e" stroke-width="1.15"/><path d="M1477.0,363.44 L1481.3,367.94 L1485.6,363.44" fill="none" stroke="#111" stroke-width="1.75" stroke-linecap="round" stroke-linejoin="round"/><rect x="290.0" y="377.18" width="174.3" height="19.4" rx="1.6" fill="#fff" stroke="#5e5e5e" stroke-width="1.18"/><rect x="529.9" y="377.18" width="139.2" height="19.4" rx="1.6" fill="#fff" stroke="#5e5e5e" stroke-width="1.18"/><rect x="723.5" y="377.18" width="69.4" height="19.4" rx="1.6" fill="#fff" stroke="#5e5e5e" stroke-width="1.18"/><rect x="801.7" y="377.18" width="69.4" height="19.4" rx="1.6" fill="#fff" stroke="#5e5e5e" stroke-width="1.18"/><rect x="1021.3" y="377.18" width="139" height="19.4" rx="1.6" fill="#fff" stroke="#5e5e5e" stroke-width="1.18"/><rect x="1214.1" y="377.18" width="69.6" height="19.4" rx="1.6" fill="#fff" stroke="#5e5e5e" stroke-width="1.18"/><rect x="1292.9" y="377.18" width="69.8" height="19.4" rx="1.6" fill="#fff" stroke="#5e5e5e" stroke-width="1.18"/><rect x="928.9" y="378.03" width="52.2" height="17.8" rx="2.5" fill="#fff" stroke="#5e5e5e" stroke-width="1.15"/><path d="M967.7,384.73 L972.0,389.23 L976.3,384.73" fill="none" stroke="#111" stroke-width="1.75" stroke-linecap="round" stroke-linejoin="round"/><rect x="1419.5" y="378.03" width="70.9" height="17.8" rx="2.5" fill="#fff" stroke="#5e5e5e" stroke-width="1.15"/><path d="M1477.0,384.73 L1481.3,389.23 L1485.6,384.73" fill="none" stroke="#111" stroke-width="1.75" stroke-linecap="round" stroke-linejoin="round"/><rect x="290.0" y="398.47" width="174.3" height="19.4" rx="1.6" fill="#fff" stroke="#5e5e5e" stroke-width="1.18"/><rect x="529.9" y="398.47" width="139.2" height="19.4" rx="1.6" fill="#fff" stroke="#5e5e5e" stroke-width="1.18"/><rect x="723.5" y="398.47" width="69.4" height="19.4" rx="1.6" fill="#fff" stroke="#5e5e5e" stroke-width="1.18"/><rect x="801.7" y="398.47" width="69.4" height="19.4" rx="1.6" fill="#fff" stroke="#5e5e5e" stroke-width="1.18"/><rect x="1021.3" y="398.47" width="139" height="19.4" rx="1.6" fill="#fff" stroke="#5e5e5e" stroke-width="1.18"/><rect x="1214.1" y="398.47" width="69.6" height="19.4" rx="1.6" fill="#fff" stroke="#5e5e5e" stroke-width="1.18"/><rect x="1292.9" y="398.47" width="69.8" height="19.4" rx="1.6" fill="#fff" stroke="#5e5e5e" stroke-width="1.18"/><rect x="928.9" y="399.32" width="52.2" height="17.8" rx="2.5" fill="#fff" stroke="#5e5e5e" stroke-width="1.15"/><path d="M967.7,406.02 L972.0,410.52 L976.3,406.02" fill="none" stroke="#111" stroke-width="1.75" stroke-linecap="round" stroke-linejoin="round"/><rect x="1419.5" y="399.32" width="70.9" height="17.8" rx="2.5" fill="#fff" stroke="#5e5e5e" stroke-width="1.15"/><path d="M1477.0,406.02 L1481.3,410.52 L1485.6,406.02" fill="none" stroke="#111" stroke-width="1.75" stroke-linecap="round" stroke-linejoin="round"/><rect x="290.0" y="419.76" width="174.3" height="19.4" rx="1.6" fill="#fff" stroke="#5e5e5e" stroke-width="1.18"/><rect x="529.9" y="419.76" width="139.2" height="19.4" rx="1.6" fill="#fff" stroke="#5e5e5e" stroke-width="1.18"/><rect x="723.5" y="419.76" width="69.4" height="19.4" rx="1.6" fill="#fff" stroke="#5e5e5e" stroke-width="1.18"/><rect x="801.7" y="419.76" width="69.4" height="19.4" rx="1.6" fill="#fff" stroke="#5e5e5e" stroke-width="1.18"/><rect x="1021.3" y="419.76" width="139" height="19.4" rx="1.6" fill="#fff" stroke="#5e5e5e" stroke-width="1.18"/><rect x="1214.1" y="419.76" width="69.6" height="19.4" rx="1.6" fill="#fff" stroke="#5e5e5e" stroke-width="1.18"/><rect x="1292.9" y="419.76" width="69.8" height="19.4" rx="1.6" fill="#fff" stroke="#5e5e5e" stroke-width="1.18"/><rect x="928.9" y="420.61" width="52.2" height="17.8" rx="2.5" fill="#fff" stroke="#5e5e5e" stroke-width="1.15"/><path d="M967.7,427.31 L972.0,431.81 L976.3,427.31" fill="none" stroke="#111" stroke-width="1.75" stroke-linecap="round" stroke-linejoin="round"/><rect x="1419.5" y="420.61" width="70.9" height="17.8" rx="2.5" fill="#fff" stroke="#5e5e5e" stroke-width="1.15"/><path d="M1477.0,427.31 L1481.3,431.81 L1485.6,427.31" fill="none" stroke="#111" stroke-width="1.75" stroke-linecap="round" stroke-linejoin="round"/><rect x="290.0" y="441.05" width="174.3" height="19.4" rx="1.6" fill="#fff" stroke="#5e5e5e" stroke-width="1.18"/><rect x="529.9" y="441.05" width="139.2" height="19.4" rx="1.6" fill="#fff" stroke="#5e5e5e" stroke-width="1.18"/><rect x="723.5" y="441.05" width="69.4" height="19.4" rx="1.6" fill="#fff" stroke="#5e5e5e" stroke-width="1.18"/><rect x="801.7" y="441.05" width="69.4" height="19.4" rx="1.6" fill="#fff" stroke="#5e5e5e" stroke-width="1.18"/><rect x="1021.3" y="441.05" width="139" height="19.4" rx="1.6" fill="#fff" stroke="#5e5e5e" stroke-width="1.18"/><rect x="1214.1" y="441.05" width="69.6" height="19.4" rx="1.6" fill="#fff" stroke="#5e5e5e" stroke-width="1.18"/><rect x="1292.9" y="441.05" width="69.8" height="19.4" rx="1.6" fill="#fff" stroke="#5e5e5e" stroke-width="1.18"/><rect x="928.9" y="441.9" width="52.2" height="17.8" rx="2.5" fill="#fff" stroke="#5e5e5e" stroke-width="1.15"/><path d="M967.7,448.6 L972.0,453.1 L976.3,448.6" fill="none" stroke="#111" stroke-width="1.75" stroke-linecap="round" stroke-linejoin="round"/><rect x="1419.5" y="441.9" width="70.9" height="17.8" rx="2.5" fill="#fff" stroke="#5e5e5e" stroke-width="1.15"/><path d="M1477.0,448.6 L1481.3,453.1 L1485.6,448.6" fill="none" stroke="#111" stroke-width="1.75" stroke-linecap="round" stroke-linejoin="round"/><rect x="290.0" y="462.34" width="174.3" height="19.4" rx="1.6" fill="#fff" stroke="#5e5e5e" stroke-width="1.18"/><rect x="529.9" y="462.34" width="139.2" height="19.4" rx="1.6" fill="#fff" stroke="#5e5e5e" stroke-width="1.18"/><rect x="723.5" y="462.34" width="69.4" height="19.4" rx="1.6" fill="#fff" stroke="#5e5e5e" stroke-width="1.18"/><rect x="801.7" y="462.34" width="69.4" height="19.4" rx="1.6" fill="#fff" stroke="#5e5e5e" stroke-width="1.18"/><rect x="1021.3" y="462.34" width="139" height="19.4" rx="1.6" fill="#fff" stroke="#5e5e5e" stroke-width="1.18"/><rect x="1214.1" y="462.34" width="69.6" height="19.4" rx="1.6" fill="#fff" stroke="#5e5e5e" stroke-width="1.18"/><rect x="1292.9" y="462.34" width="69.8" height="19.4" rx="1.6" fill="#fff" stroke="#5e5e5e" stroke-width="1.18"/><rect x="928.9" y="463.19" width="52.2" height="17.8" rx="2.5" fill="#fff" stroke="#5e5e5e" stroke-width="1.15"/><path d="M967.7,469.89 L972.0,474.39 L976.3,469.89" fill="none" stroke="#111" stroke-width="1.75" stroke-linecap="round" stroke-linejoin="round"/><rect x="1419.5" y="463.19" width="70.9" height="17.8" rx="2.5" fill="#fff" stroke="#5e5e5e" stroke-width="1.15"/><path d="M1477.0,469.89 L1481.3,474.39 L1485.6,469.89" fill="none" stroke="#111" stroke-width="1.75" stroke-linecap="round" stroke-linejoin="round"/><rect x="290.0" y="483.63" width="174.3" height="19.4" rx="1.6" fill="#fff" stroke="#5e5e5e" stroke-width="1.18"/><rect x="529.9" y="483.63" width="139.2" height="19.4" rx="1.6" fill="#fff" stroke="#5e5e5e" stroke-width="1.18"/><rect x="723.5" y="483.63" width="69.4" height="19.4" rx="1.6" fill="#fff" stroke="#5e5e5e" stroke-width="1.18"/><rect x="801.7" y="483.63" width="69.4" height="19.4" rx="1.6" fill="#fff" stroke="#5e5e5e" stroke-width="1.18"/><rect x="1021.3" y="483.63" width="139" height="19.4" rx="1.6" fill="#fff" stroke="#5e5e5e" stroke-width="1.18"/><rect x="1214.1" y="483.63" width="69.6" height="19.4" rx="1.6" fill="#fff" stroke="#5e5e5e" stroke-width="1.18"/><rect x="1292.9" y="483.63" width="69.8" height="19.4" rx="1.6" fill="#fff" stroke="#5e5e5e" stroke-width="1.18"/><rect x="928.9" y="484.48" width="52.2" height="17.8" rx="2.5" fill="#fff" stroke="#5e5e5e" stroke-width="1.15"/><path d="M967.7,491.18 L972.0,495.68 L976.3,491.18" fill="none" stroke="#111" stroke-width="1.75" stroke-linecap="round" stroke-linejoin="round"/><rect x="1419.5" y="484.48" width="70.9" height="17.8" rx="2.5" fill="#fff" stroke="#5e5e5e" stroke-width="1.15"/><path d="M1477.0,491.18 L1481.3,495.68 L1485.6,491.18" fill="none" stroke="#111" stroke-width="1.75" stroke-linecap="round" stroke-linejoin="round"/><rect x="290.0" y="504.92" width="174.3" height="19.4" rx="1.6" fill="#fff" stroke="#5e5e5e" stroke-width="1.18"/><rect x="529.9" y="504.92" width="139.2" height="19.4" rx="1.6" fill="#fff" stroke="#5e5e5e" stroke-width="1.18"/><rect x="723.5" y="504.92" width="69.4" height="19.4" rx="1.6" fill="#fff" stroke="#5e5e5e" stroke-width="1.18"/><rect x="801.7" y="504.92" width="69.4" height="19.4" rx="1.6" fill="#fff" stroke="#5e5e5e" stroke-width="1.18"/><rect x="1021.3" y="504.92" width="139" height="19.4" rx="1.6" fill="#fff" stroke="#5e5e5e" stroke-width="1.18"/><rect x="1214.1" y="504.92" width="69.6" height="19.4" rx="1.6" fill="#fff" stroke="#5e5e5e" stroke-width="1.18"/><rect x="1292.9" y="504.92" width="69.8" height="19.4" rx="1.6" fill="#fff" stroke="#5e5e5e" stroke-width="1.18"/><rect x="928.9" y="505.77" width="52.2" height="17.8" rx="2.5" fill="#fff" stroke="#5e5e5e" stroke-width="1.15"/><path d="M967.7,512.47 L972.0,516.97 L976.3,512.47" fill="none" stroke="#111" stroke-width="1.75" stroke-linecap="round" stroke-linejoin="round"/><rect x="1419.5" y="505.77" width="70.9" height="17.8" rx="2.5" fill="#fff" stroke="#5e5e5e" stroke-width="1.15"/><path d="M1477.0,512.47 L1481.3,516.97 L1485.6,512.47" fill="none" stroke="#111" stroke-width="1.75" stroke-linecap="round" stroke-linejoin="round"/><rect x="290.0" y="526.21" width="174.3" height="19.4" rx="1.6" fill="#fff" stroke="#5e5e5e" stroke-width="1.18"/><rect x="529.9" y="526.21" width="139.2" height="19.4" rx="1.6" fill="#fff" stroke="#5e5e5e" stroke-width="1.18"/><rect x="723.5" y="526.21" width="69.4" height="19.4" rx="1.6" fill="#fff" stroke="#5e5e5e" stroke-width="1.18"/><rect x="801.7" y="526.21" width="69.4" height="19.4" rx="1.6" fill="#fff" stroke="#5e5e5e" stroke-width="1.18"/><rect x="1021.3" y="526.21" width="139" height="19.4" rx="1.6" fill="#fff" stroke="#5e5e5e" stroke-width="1.18"/><rect x="1214.1" y="526.21" width="69.6" height="19.4" rx="1.6" fill="#fff" stroke="#5e5e5e" stroke-width="1.18"/><rect x="1292.9" y="526.21" width="69.8" height="19.4" rx="1.6" fill="#fff" stroke="#5e5e5e" stroke-width="1.18"/><rect x="928.9" y="527.06" width="52.2" height="17.8" rx="2.5" fill="#fff" stroke="#5e5e5e" stroke-width="1.15"/><path d="M967.7,533.76 L972.0,538.26 L976.3,533.76" fill="none" stroke="#111" stroke-width="1.75" stroke-linecap="round" stroke-linejoin="round"/><rect x="1419.5" y="527.06" width="70.9" height="17.8" rx="2.5" fill="#fff" stroke="#5e5e5e" stroke-width="1.15"/><path d="M1477.0,533.76 L1481.3,538.26 L1485.6,533.76" fill="none" stroke="#111" stroke-width="1.75" stroke-linecap="round" stroke-linejoin="round"/><rect x="290.0" y="547.5" width="174.3" height="19.4" rx="1.6" fill="#fff" stroke="#5e5e5e" stroke-width="1.18"/><rect x="529.9" y="547.5" width="139.2" height="19.4" rx="1.6" fill="#fff" stroke="#5e5e5e" stroke-width="1.18"/><rect x="723.5" y="547.5" width="69.4" height="19.4" rx="1.6" fill="#fff" stroke="#5e5e5e" stroke-width="1.18"/><rect x="801.7" y="547.5" width="69.4" height="19.4" rx="1.6" fill="#fff" stroke="#5e5e5e" stroke-width="1.18"/><rect x="1021.3" y="547.5" width="139" height="19.4" rx="1.6" fill="#fff" stroke="#5e5e5e" stroke-width="1.18"/><rect x="1214.1" y="547.5" width="69.6" height="19.4" rx="1.6" fill="#fff" stroke="#5e5e5e" stroke-width="1.18"/><rect x="1292.9" y="547.5" width="69.8" height="19.4" rx="1.6" fill="#fff" stroke="#5e5e5e" stroke-width="1.18"/><rect x="928.9" y="548.35" width="52.2" height="17.8" rx="2.5" fill="#fff" stroke="#5e5e5e" stroke-width="1.15"/><path d="M967.7,555.05 L972.0,559.55 L976.3,555.05" fill="none" stroke="#111" stroke-width="1.75" stroke-linecap="round" stroke-linejoin="round"/><rect x="1419.5" y="548.35" width="70.9" height="17.8" rx="2.5" fill="#fff" stroke="#5e5e5e" stroke-width="1.15"/><path d="M1477.0,555.05 L1481.3,559.55 L1485.6,555.05" fill="none" stroke="#111" stroke-width="1.75" stroke-linecap="round" stroke-linejoin="round"/><rect x="290.0" y="568.79" width="174.3" height="19.4" rx="1.6" fill="#fff" stroke="#5e5e5e" stroke-width="1.18"/><rect x="529.9" y="568.79" width="139.2" height="19.4" rx="1.6" fill="#fff" stroke="#5e5e5e" stroke-width="1.18"/><rect x="723.5" y="568.79" width="69.4" height="19.4" rx="1.6" fill="#fff" stroke="#5e5e5e" stroke-width="1.18"/><rect x="801.7" y="568.79" width="69.4" height="19.4" rx="1.6" fill="#fff" stroke="#5e5e5e" stroke-width="1.18"/><rect x="1021.3" y="568.79" width="139" height="19.4" rx="1.6" fill="#fff" stroke="#5e5e5e" stroke-width="1.18"/><rect x="1214.1" y="568.79" width="69.6" height="19.4" rx="1.6" fill="#fff" stroke="#5e5e5e" stroke-width="1.18"/><rect x="1292.9" y="568.79" width="69.8" height="19.4" rx="1.6" fill="#fff" stroke="#5e5e5e" stroke-width="1.18"/><rect x="928.9" y="569.64" width="52.2" height="17.8" rx="2.5" fill="#fff" stroke="#5e5e5e" stroke-width="1.15"/><path d="M967.7,576.34 L972.0,580.84 L976.3,576.34" fill="none" stroke="#111" stroke-width="1.75" stroke-linecap="round" stroke-linejoin="round"/><rect x="1419.5" y="569.64" width="70.9" height="17.8" rx="2.5" fill="#fff" stroke="#5e5e5e" stroke-width="1.15"/><path d="M1477.0,576.34 L1481.3,580.84 L1485.6,576.34" fill="none" stroke="#111" stroke-width="1.75" stroke-linecap="round" stroke-linejoin="round"/></svg>
<div class="itx" style="left:293.7px;top:336.5px">simet_port3</div>
<div class="itx" style="left:533.6px;top:336.5px">192.168.1.100</div>
<div class="itx" style="left:727.2px;top:336.5px">80</div>
<div class="itx" style="left:805.4px;top:336.5px">80</div>
<div class="itx" style="left:1217.8px;top:336.5px">9090</div>
<div class="itx" style="left:1296.6px;top:336.5px">9090</div>
<div class="itx" style="left:933.9px;top:336.7px;color:#111">Both</div>
<div class="til" style="left:794.2px;top:337.7px">~</div>
<div class="til" style="left:1285.2px;top:337.7px">~</div>
<div class="itx" style="left:1424.6px;top:336.7px;color:#111">Any</div>
<div class="til" style="left:794.2px;top:358.99px">~</div>
<div class="til" style="left:1285.2px;top:358.99px">~</div>
<div class="itx" style="left:1424.6px;top:357.99px;color:#111">Any</div>
<div class="til" style="left:794.2px;top:380.28px">~</div>
<div class="til" style="left:1285.2px;top:380.28px">~</div>
<div class="itx" style="left:1424.6px;top:379.28px;color:#111">Any</div>
<div class="til" style="left:794.2px;top:401.57px">~</div>
<div class="til" style="left:1285.2px;top:401.57px">~</div>
<div class="itx" style="left:1424.6px;top:400.57px;color:#111">Any</div>
<div class="til" style="left:794.2px;top:422.86px">~</div>
<div class="til" style="left:1285.2px;top:422.86px">~</div>
<div class="itx" style="left:1424.6px;top:421.86px;color:#111">Any</div>
<div class="til" style="left:794.2px;top:444.15px">~</div>
<div class="til" style="left:1285.2px;top:444.15px">~</div>
<div class="itx" style="left:1424.6px;top:443.15px;color:#111">Any</div>
<div class="til" style="left:794.2px;top:465.44px">~</div>
<div class="til" style="left:1285.2px;top:465.44px">~</div>
<div class="itx" style="left:1424.6px;top:464.44px;color:#111">Any</div>
<div class="til" style="left:794.2px;top:486.73px">~</div>
<div class="til" style="left:1285.2px;top:486.73px">~</div>
<div class="itx" style="left:1424.6px;top:485.73px;color:#111">Any</div>
<div class="til" style="left:794.2px;top:508.02px">~</div>
<div class="til" style="left:1285.2px;top:508.02px">~</div>
<div class="itx" style="left:1424.6px;top:507.02px;color:#111">Any</div>
<div class="til" style="left:794.2px;top:529.31px">~</div>
<div class="til" style="left:1285.2px;top:529.31px">~</div>
<div class="itx" style="left:1424.6px;top:528.31px;color:#111">Any</div>
<div class="til" style="left:794.2px;top:550.6px">~</div>
<div class="til" style="left:1285.2px;top:550.6px">~</div>
<div class="itx" style="left:1424.6px;top:549.6px;color:#111">Any</div>
<div class="til" style="left:794.2px;top:571.89px">~</div>
<div class="til" style="left:1285.2px;top:571.89px">~</div>
<div class="itx" style="left:1424.6px;top:570.89px;color:#111">Any</div>
<svg class="red" style="left:273px;top:326px" width="1236" height="43" viewBox="273 326 1236 43"><rect x="276.75" y="330.5" width="1228.35" height="34.65" fill="none" stroke="#fe0000" stroke-width="3.4" stroke-linejoin="round"/></svg>
<svg class="abs" style="left:286px;top:600px" width="92" height="30" viewBox="286 600 92 30"><rect x="289.95" y="604.55" width="39.25" height="19.8" rx="2.6" fill="#efefef" stroke="#6e6e6e" stroke-width="1.1"/><rect x="334" y="604.5" width="38.2" height="19.65" rx="2.6" fill="#efefef" stroke="#dadada" stroke-width="1"/></svg>
<div class="itx" style="left:289.4px;top:606.1px;width:40.4px;text-align:center;color:#111">Add</div>
<div class="itx" style="left:333.5px;top:606.1px;width:39.4px;text-align:center;color:#2a2a2a">Edit</div>
<svg class="red" style="left:282px;top:594px" width="57" height="42" viewBox="282 594 57 42"><rect x="286.3" y="597.7" width="49.0" height="34.1" fill="none" stroke="#fe0000" stroke-width="3.4" stroke-linejoin="round"/></svg>
<svg class="abs" style="left:285px;top:630px" width="1240" height="10" viewBox="285 630 1240 10"><rect x="291" y="634.2" width="1223.5" height="1.6" fill="#b2b2b2"/></svg>
<div class="lbl" style="left:295.6px;top:645px">Current Port Forwarding Table</div>
<div class="th" style="left:288.75px;width:72.75px">Edit</div>
<div class="td" style="left:288.75px;width:72.75px"></div>
<div class="th" style="left:363px;width:242.3px">Comment Local</div>
<div class="td" style="left:363px;width:242.3px">simet_port</div>
<div class="th" style="left:607px;width:157.4px">IP Address</div>
<div class="td" style="left:607px;width:157.4px">192.168.1.100</div>
<div class="th" style="left:766px;width:121.8px">Protocol</div>
<div class="td" style="left:766px;width:121.8px">TCP+UDP</div>
<div class="th" style="left:889.4px;width:96.6px">Local Port</div>
<div class="td" style="left:889.4px;width:96.6px">8080</div>
<div class="th" style="left:987.5px;width:97.5px">Enable</div>
<div class="td" style="left:987.5px;width:97.5px">Enable</div>
<div class="th" style="left:1086.3px;width:157.5px">Remote Host</div>
<div class="td" style="left:1086.3px;width:157.5px"></div>
<div class="th" style="left:1245.2px;width:97.6px">Public Port</div>
<div class="td" style="left:1245.2px;width:97.6px">8080</div>
<div class="th" style="left:1344.2px;width:96.6px">Interface</div>
<div class="td" style="left:1344.2px;width:96.6px">Any</div>
<div class="th" style="left:1442.6px;width:72.1px">Select</div>
<div class="td" style="left:1442.6px;width:72.1px"></div>
<div class="abs" style="left:320.6px;top:693.2px;width:10.6px;height:10.6px;border:1.1px solid #6f6f6f;border-radius:50%;background:#fff;clip-path:inset(0 0 8.6px 0)"></div>
<div class="abs" style="left:1473.6px;top:690.6px;width:11px;height:11px;border:1.1px solid #6f6f6f;border-radius:2px;background:#fff;clip-path:inset(0 0 6.6px 0)"></div>
<svg class="abs" style="left:1565px;top:80px" width="26" height="620" viewBox="1565 80 26 620">
<rect x="1569.3" y="82" width="18.1" height="613.8" fill="#f1f1f1"/>
<rect x="1571.2" y="99.8" width="14.6" height="500.4" fill="#c1c1c1"/>
<path d="M1574.4,93.3 L1578.3,88.7 L1582.2,93.3 Z" fill="#a3a3a3"/>
<path d="M1574.3,684 L1578.2,688.4 L1582.1,684 Z" fill="#505050"/>
</svg>
<svg class="abs" style="left:1470px;top:606px" width="94" height="90" viewBox="1470 606 94 90">
<path fill-rule="evenodd" fill="#1f5a8c" d="M1473.3,652.55 a43.45,43.45 0 1,0 86.9,0 a43.45,43.45 0 1,0 -86.9,0 Z M1474.9,653.8 a41.7,26.2 0 1,0 83.4,0 a41.7,26.2 0 1,0 -83.4,0 Z"/>
<g fill="#1f5a8c">
<rect x="1486.9" y="644.5" width="6.8" height="17.8" rx="3.2"/>
<rect x="1499.9" y="638.5" width="6.7" height="29.5" rx="3.2"/>
<rect x="1512.5" y="651.1" width="6.7" height="16.9" rx="3.2"/>
<rect x="1525" y="638.5" width="6.7" height="29.5" rx="3.2"/>
<rect x="1537.8" y="644.5" width="6.8" height="17.8" rx="3.2"/>
</g>
<circle cx="1515.8" cy="646.4" r="3.4" fill="#ee2a2e"/>
</svg>
</div>
</body></html>
